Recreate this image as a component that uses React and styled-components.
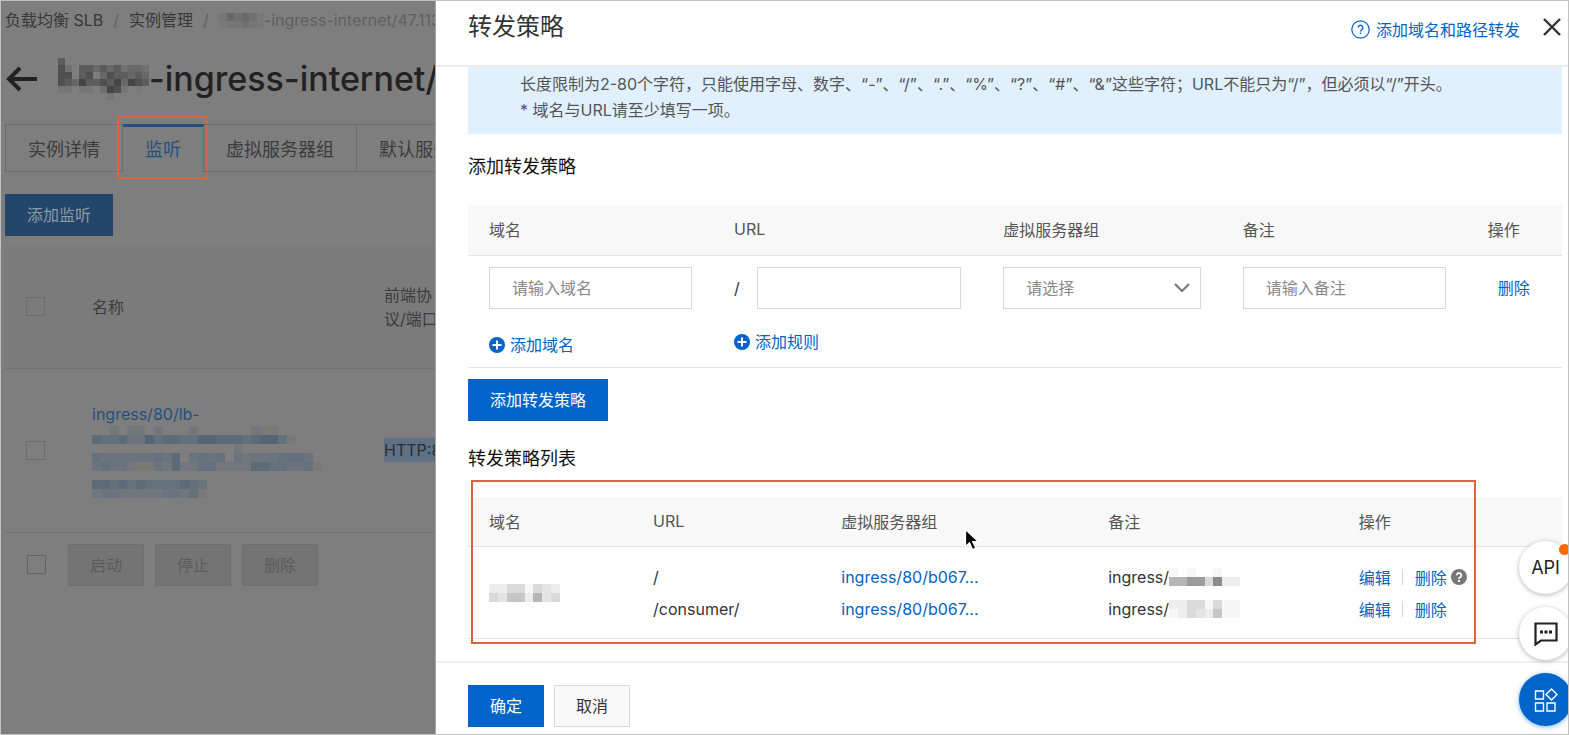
import React, { useState } from 'react'
import styled, { createGlobalStyle, css } from 'styled-components';

const GlobalStyle = createGlobalStyle`
    *, *::before, *::after {
        box-sizing: border-box;
    }
    body {
        margin: 0;
        background: #fff;
    }
    body, button, input, select {
        font-family: Inter, 'Noto Sans CJK SC', sans-serif;
        font-size: 16px;
    }
    h1, h2, p {
        margin: 0;
        font-weight: 400;
    }
    a {
        text-decoration: none;
    }
`;

const Frame = styled.div`
    position: relative;
    display: flex;
    min-height: 100vh;
    border: 1px solid #c1c1c1;
    overflow: hidden;
`;

/* ---------- page behind the drawer ---------- */

const Page = styled.main`
    flex: 0 0 435px;
    min-width: 0;
    padding-left: 4px;
    overflow: hidden;
    white-space: nowrap;
    background: #7e7e7e;
    border-right: 1px solid #a6a6a6;
    color: #3c3c3c;
`;

const Breadcrumb = styled.nav`
    display: flex;
    align-items: center;
    gap: 10px;
    height: 38px;
    line-height: 24px;
    color: #606060;

    a {
        color: #383838;
    }
`;

const Current = styled.span`
    display: flex;
    align-items: center;
`;

const TitleRow = styled.div`
    display: flex;
    align-items: center;
    height: 80px;
`;

const BackButton = styled.button`
    display: flex;
    padding: 0;
    margin-right: 20px;
    border: 0;
    background: none;
    color: #222;
`;

const PageTitle = styled.h1`
    display: flex;
    align-items: center;
    font-size: 34px;
    font-weight: 500;
    line-height: 48px;
    color: #222;
`;

const Tabs = styled.div`
    display: flex;
    margin-top: 5px;
    border-left: 1px solid #6c6c6c;
`;

const Tab = styled.button`
    position: relative;
    height: 48px;
    padding: 0 22px;
    border: 1px solid #6c6c6c;
    border-left: 0;
    background: none;
    font-size: 18px;
    color: #3c3c3c;

    ${({ $active }) => $active && css`
        padding-bottom: 2px;
        border-top: 3px solid #24507f;
        border-bottom-color: transparent;
        color: #24507f;
    `}
`;

const TabMark = styled.span`
    position: absolute;
    inset: -11px -5px -8px -6px;
    border: 2px solid #dc6340;
`;

const DimPrimary = styled.button`
    display: block;
    height: 42px;
    margin: 22px 0 10px;
    padding: 0 22px 2px;
    border: 0;
    background: #23466a;
    color: #8c9aa8;
`;

const ListenerTable = styled.table`
    width: 520px;
    table-layout: fixed;
    border-collapse: collapse;
    line-height: 24px;
    text-align: left;

    th, td {
        padding: 0 21px;
        font-weight: 400;
        border-bottom: 1px solid #727272;
    }
    th {
        height: 122px;
        background: #7b7b7b;
    }
    td {
        height: 164px;
    }
`;

const PlainCheckbox = styled.input`
    appearance: none;
    display: block;
    width: 19px;
    height: 19px;
    margin: 0;
    border: 1px solid ${({ $strong }) => ($strong ? '#646464' : '#6c6c6c')};
`;

const ListenerLink = styled.a`
    display: block;
    color: #24507f;
`;

const Selected = styled.span`
    display: inline-block;
    background: #5f7285;
    color: #2a2f35;
`;

const BatchBar = styled.div`
    display: flex;
    align-items: center;
    gap: 11px;
    padding: 11px 0 0 22px;
`;

const BatchButton = styled.button`
    height: 42px;
    padding: 0 21px 2px;
    border: 1px solid #6f6f6f;
    background: #747474;
    color: #5c5c5c;

    ${PlainCheckbox} + & {
        margin-left: 11px;
    }
`;

/* ---------- drawer ---------- */

const Drawer = styled.section`
    display: flex;
    flex: 1;
    flex-direction: column;
    min-width: 0;
    background: #fff;
    color: #333;
`;

const DrawerHeader = styled.header`
    display: flex;
    align-items: center;
    height: 66px;
    padding: 0 7px 12px 32px;
    border-bottom: 2px solid #ebecee;
`;

const DrawerTitle = styled.h2`
    flex: 1;
    font-size: 24px;
    line-height: 36px;
`;

const HelpLink = styled.a`
    display: flex;
    align-items: center;
    gap: 6px;
    margin-top: 4px;
    color: #0064c8;
`;

const CloseButton = styled.button`
    display: flex;
    margin-left: 23px;
    padding: 0;
    border: 0;
    background: none;
    color: #333;
`;

const DrawerBody = styled.div`
    flex: 1;
    padding: 0 6px 21px 32px;
`;

const Notice = styled.div`
    padding: 4px 52px 11px;
    background: #e0f0ff;
    line-height: 26px;
    color: #555;
`;

const SectionTitle = styled.h2`
    margin: 19px 0 24px;
    font-size: 18px;
    line-height: 28px;
    color: #111;
`;

const DataTable = styled.table`
    width: 100%;
    table-layout: fixed;
    border-collapse: collapse;
    text-align: left;

    th, td {
        padding: 0 21px;
        font-weight: 400;
        border-bottom: 1px solid #e3e4e6;
    }
    th {
        height: 50px;
        padding-bottom: 1px;
        background: #f8f8f8;
        color: #555;
        white-space: nowrap;
    }
`;

const FormCell = styled.td`
    height: 112px;
    vertical-align: top;
`;

const Field = styled.div`
    position: relative;
    display: flex;
    align-items: center;
    gap: 17px;
    margin: 11px 0 ${({ $gap }) => $gap || 0}px;
    line-height: 24px;
`;

const control = css`
    flex: 1;
    width: 100%;
    min-width: 0;
    height: 42px;
    padding: 0 22px;
    border: 1px solid #d7d8d9;
    border-radius: 0;
    background: #fff;
    color: #888;
`;

const TextInput = styled.input`
    ${control}

    &::placeholder {
        color: #888;
        opacity: 1;
    }
`;

const SelectInput = styled.select`
    ${control}
    appearance: none;
`;

const Chevron = styled.svg`
    position: absolute;
    right: 11px;
    pointer-events: none;
`;

const AddLink = styled.a`
    display: flex;
    align-items: center;
    gap: 5px;
    line-height: 24px;
    color: #0064c8;
`;

const RowLink = styled.a`
    padding: 0 10px;
    line-height: 42px;
    white-space: nowrap;
    color: #0064c8;
`;

const Button = styled.button`
    height: 42px;
    padding: 0 21px 2px;
    border: 1px solid ${({ $primary }) => ($primary ? '#0064c8' : '#d9d9d9')};
    background: ${({ $primary }) => ($primary ? '#0064c8' : '#f8f8f8')};
    color: ${({ $primary }) => ($primary ? '#fff' : '#333')};
`;

const FormActions = styled.div`
    padding: 11px 0 5px;
`;

const RuleList = styled.div`
    position: relative;
`;

const ListMark = styled.div`
    position: absolute;
    inset: -17px 86px -5px 3px;
    border: 2px solid #dc6340;
    pointer-events: none;
`;

const Cursor = styled.svg`
    position: absolute;
    top: 31px;
    left: 496px;
`;

const ListCell = styled.td`
    height: 92px;
`;

const Line = styled.div`
    display: flex;
    align-items: center;
    height: 32px;
    white-space: nowrap;

    a {
        color: #0064c8;
    }
`;

const Divider = styled.span`
    width: 1px;
    height: 16px;
    margin: 0 12px 0 11px;
    background: #d4d4d4;
`;

const HintIcon = styled.svg`
    margin-left: 4px;
`;

const DrawerFooter = styled.footer`
    display: flex;
    gap: 10px;
    padding: 22px 32px 7px;
    border-top: 2px solid #f0f0f1;
`;

/* ---------- floating tools ---------- */

const FloatTools = styled.div`
    position: absolute;
    right: -4px;
    bottom: 8px;
    display: flex;
    flex-direction: column;
    gap: 13px;
`;

const FloatButton = styled.button`
    position: relative;
    display: flex;
    align-items: center;
    justify-content: center;
    width: 53px;
    height: 53px;
    padding: 0;
    border: 0;
    border-radius: 50%;
    background: ${({ $primary }) => ($primary ? '#0064c8' : '#fff')};
    box-shadow: 0 1px 5px ${({ $primary }) => ($primary ? 'rgba(0, 100, 200, 0.5)' : 'rgba(0, 0, 0, 0.3)')};
    font-size: 18px;
    color: #222;
`;

const Badge = styled.span`
    position: absolute;
    top: 3px;
    right: 2px;
    width: 11px;
    height: 11px;
    border-radius: 50%;
    background: #ff6a00;
`;

// Shades used for the masked out names, dots are left empty
const darkShades = {
    1: '#454545', 2: '#505050', 3: '#5c5c5c', 4: '#686868', 5: '#707070', 6: '#767676', 7: '#7a7a7a',
};

const blueShades = {
    a: '#556372', b: '#5d6a77', c: '#65707d', d: '#6b737e', e: '#72777d', f: '#797978',
};

const lightShades = {
    1: '#8c8c8c', 2: '#9c9c9c', 3: '#b6b6b6', 4: '#c6c6c6', 5: '#dadada', 6: '#e4e4e4', 7: '#ededed', 8: '#f7f7f7',
};

const Mosaic = ({ rows, shades, width, height }) => (
    <svg
        width={width}
        height={height}
        viewBox={`0 0 ${rows[0].length} ${rows.length}`}
        preserveAspectRatio="none"
        shapeRendering="crispEdges"
        display="block"
        aria-hidden="true"
    >
        {rows.map((row, y) => row.split('').map((cell, x) => (
            shades[cell] && <rect key={`${x}-${y}`} x={x} y={y} width="1" height="1" fill={shades[cell]} />
        )))}
    </svg>
);

const PlusIcon = () => (
    <svg width="16" height="16" viewBox="0 0 16 16" aria-hidden="true">
        <circle cx="8" cy="8" r="8" fill="#0064c8" />
        <path d="M8 3.5v9M3.5 8h9" stroke="#fff" strokeWidth="2" />
    </svg>
);

const rules = [
    { url: '/', group: 'ingress/80/b067...', mask: ['8.8..8..', '33225177'], hint: true },
    { url: '/consumer/', group: 'ingress/80/b067...', mask: ['77558588', '87567488'] },
];

export default function App() {

    const [domain, setDomain] = useState('');
    const [url, setUrl] = useState('');
    const [remark, setRemark] = useState('');

    const handleChange = setter => e => setter(e.target.value);

    return (
        <Frame>
            <GlobalStyle />
            <Page>
                <Breadcrumb>
                    <a href="#slb">负载均衡 SLB</a>
                    <span>/</span>
                    <a href="#instances">实例管理</a>
                    <span>/</span>
                    <Current>
                        <Mosaic rows={['645457', '766567']} shades={darkShades} width={45} height={15} />
                        -ingress-internet/47.113
                    </Current>
                </Breadcrumb>
                <TitleRow>
                    <BackButton aria-label="返回">
                        <svg width="33" height="26" viewBox="0 0 33 26" fill="none" stroke="currentColor" strokeWidth="4">
                            <path d="M32 13H4M15 2L4 13l11 11" />
                        </svg>
                    </BackButton>
                    <PageTitle>
                        <Mosaic
                            rows={[
                                '3............',
                                '25.3343435445',
                                '22.32.4233434',
                                '2341332314123',
                                '66.66.5126.7.',
                                '.......6.....',
                            ]}
                            shades={darkShades}
                            width={91}
                            height={42}
                        />
                        -ingress-internet/
                    </PageTitle>
                </TitleRow>
                <Tabs role="tablist">
                    <Tab role="tab">实例详情</Tab>
                    <Tab role="tab" aria-selected="true" $active>监听<TabMark /></Tab>
                    <Tab role="tab">虚拟服务器组</Tab>
                    <Tab role="tab">默认服务器组</Tab>
                </Tabs>
                <DimPrimary>添加监听</DimPrimary>
                <ListenerTable>
                    <colgroup>
                        <col style={{ width: 66 }} />
                        <col style={{ width: 292 }} />
                        <col />
                    </colgroup>
                    <thead>
                        <tr>
                            <th><PlainCheckbox type="checkbox" aria-label="全选" /></th>
                            <th>名称</th>
                            <th>前端协<br />议/端口</th>
                        </tr>
                    </thead>
                    <tbody>
                        <tr>
                            <td><PlainCheckbox type="checkbox" aria-label="选择监听" /></td>
                            <td>
                                <ListenerLink href="#listener">
                                    ingress/80/lb-
                                    <Mosaic
                                        rows={[
                                            '..e.ee.e...e......eff.....',
                                            'bccbddacbbccaabbbcbaacf...',
                                            '................e.........',
                                            'cddddddcdb.dcdc.dedddcccd.',
                                            'dcddeffdebeecceeeebbccddcf',
                                            '..........................',
                                            'bbcbcbccccbcd.............',
                                            'eddeeeeeddecf.............',
                                        ]}
                                        shades={blueShades}
                                        width={230}
                                        height={72}
                                    />
                                </ListenerLink>
                            </td>
                            <td><Selected>HTTP:80</Selected></td>
                        </tr>
                    </tbody>
                </ListenerTable>
                <BatchBar>
                    <PlainCheckbox type="checkbox" aria-label="批量选择" $strong />
                    <BatchButton>启动</BatchButton>
                    <BatchButton>停止</BatchButton>
                    <BatchButton>删除</BatchButton>
                </BatchBar>
            </Page>

            <Drawer>
                <DrawerHeader>
                    <DrawerTitle>转发策略</DrawerTitle>
                    <HelpLink href="#help">
                        <svg width="19" height="19" viewBox="0 0 19 19" fill="none" stroke="currentColor" aria-hidden="true">
                            <circle cx="9.5" cy="9.5" r="8.7" strokeWidth="1.2" />
                            <path d="M7.2 7.6a2.3 2.3 0 1 1 3.6 1.9c-.9.6-1.3 1-1.3 1.9" strokeWidth="1.4" />
                            <path d="M9.5 12.6v1.5" strokeWidth="1.5" />
                        </svg>
                        添加域名和路径转发
                    </HelpLink>
                    <CloseButton aria-label="关闭">
                        <svg width="18" height="18" viewBox="0 0 18 18" stroke="currentColor" strokeWidth="2.4">
                            <path d="M1 1l16 16M17 1L1 17" />
                        </svg>
                    </CloseButton>
                </DrawerHeader>
                <DrawerBody>
                    <Notice>
                        <p>长度限制为2-80个字符，只能使用字母、数字、“-”、“/”、“.”、“%”、“?”、“#”、“&”这些字符；URL不能只为“/”，但必须以“/”开头。</p>
                        <p>* 域名与URL请至少填写一项。</p>
                    </Notice>
                    <SectionTitle>添加转发策略</SectionTitle>
                    <DataTable>
                        <colgroup>
                            <col style={{ width: '22.4%' }} />
                            <col style={{ width: '24.6%' }} />
                            <col style={{ width: '21.9%' }} />
                            <col style={{ width: '22.4%' }} />
                            <col />
                        </colgroup>
                        <thead>
                            <tr>
                                <th>域名</th>
                                <th>URL</th>
                                <th>虚拟服务器组</th>
                                <th>备注</th>
                                <th>操作</th>
                            </tr>
                        </thead>
                        <tbody>
                            <tr>
                                <FormCell>
                                    <Field $gap={24}>
                                        <TextInput
                                            aria-label="域名"
                                            placeholder="请输入域名"
                                            value={domain}
                                            onChange={handleChange(setDomain)}
                                        />
                                    </Field>
                                    <AddLink href="#add-domain"><PlusIcon />添加域名</AddLink>
                                </FormCell>
                                <FormCell>
                                    <Field $gap={21}>
                                        <label htmlFor="url">/</label>
                                        <TextInput id="url" value={url} onChange={handleChange(setUrl)} />
                                    </Field>
                                    <AddLink href="#add-rule"><PlusIcon />添加规则</AddLink>
                                </FormCell>
                                <FormCell>
                                    <Field>
                                        <SelectInput aria-label="虚拟服务器组">
                                            <option>请选择</option>
                                        </SelectInput>
                                        <Chevron width="16" height="10" viewBox="0 0 16 10" fill="none" stroke="#777" strokeWidth="2">
                                            <path d="M1 1l7 7 7-7" />
                                        </Chevron>
                                    </Field>
                                </FormCell>
                                <FormCell>
                                    <Field>
                                        <TextInput
                                            aria-label="备注"
                                            placeholder="请输入备注"
                                            value={remark}
                                            onChange={handleChange(setRemark)}
                                        />
                                    </Field>
                                </FormCell>
                                <FormCell>
                                    <Field>
                                        <RowLink href="#remove">删除</RowLink>
                                    </Field>
                                </FormCell>
                            </tr>
                        </tbody>
                    </DataTable>
                    <FormActions>
                        <Button $primary>添加转发策略</Button>
                    </FormActions>
                    <SectionTitle>转发策略列表</SectionTitle>
                    <RuleList>
                        <DataTable>
                            <colgroup>
                                <col style={{ width: '15%' }} />
                                <col style={{ width: '17.2%' }} />
                                <col style={{ width: '24.4%' }} />
                                <col style={{ width: '22.9%' }} />
                                <col />
                            </colgroup>
                            <thead>
                                <tr>
                                    <th>域名</th>
                                    <th>URL</th>
                                    <th>虚拟服务器组</th>
                                    <th>备注</th>
                                    <th>操作</th>
                                </tr>
                            </thead>
                            <tbody>
                                <tr>
                                    <ListCell>
                                        <Mosaic rows={['77558567', '56447365']} shades={lightShades} width={71} height={18} />
                                    </ListCell>
                                    <ListCell>
                                        {rules.map(rule => <Line key={rule.url}>{rule.url}</Line>)}
                                    </ListCell>
                                    <ListCell>
                                        {rules.map(rule => (
                                            <Line key={rule.url}><a href="#group">{rule.group}</a></Line>
                                        ))}
                                    </ListCell>
                                    <ListCell>
                                        {rules.map(rule => (
                                            <Line key={rule.url}>
                                                ingress/
                                                <Mosaic rows={rule.mask} shades={lightShades} width={71} height={18} />
                                            </Line>
                                        ))}
                                    </ListCell>
                                    <ListCell>
                                        {rules.map(rule => (
                                            <Line key={rule.url}>
                                                <a href="#edit">编辑</a>
                                                <Divider />
                                                <a href="#delete">删除</a>
                                                {rule.hint && (
                                                    <HintIcon width="16" height="16" viewBox="0 0 16 16" fill="none" stroke="#fff">
                                                        <circle cx="8" cy="8" r="8" fill="#777" stroke="none" />
                                                        <path d="M5.7 6.3a2.3 2.3 0 1 1 3.5 2C8.3 8.8 8 9.1 8 9.9" strokeWidth="1.8" />
                                                        <path d="M8 11v2" strokeWidth="2" />
                                                    </HintIcon>
                                                )}
                                            </Line>
                                        ))}
                                    </ListCell>
                                </tr>
                            </tbody>
                        </DataTable>
                        <ListMark />
                        <Cursor width="16" height="24" viewBox="0 0 16 24" aria-hidden="true">
                            <path d="M1.5 1.5v17l4-3.7 3 6.7 3.2-1.4-3-6.5h5.5z" fill="#000" stroke="#fff" strokeWidth="1.3" />
                        </Cursor>
                    </RuleList>
                </DrawerBody>
                <DrawerFooter>
                    <Button $primary>确定</Button>
                    <Button>取消</Button>
                </DrawerFooter>
            </Drawer>

            <FloatTools>
                <FloatButton>API<Badge /></FloatButton>
                <FloatButton aria-label="反馈">
                    <svg width="24" height="24" viewBox="0 0 24 24" fill="none" stroke="#222" strokeWidth="2.2">
                        <path d="M1.5 1.5h21v17H7l-5.500 4z" />
                        <path d="M6 10h3M10.500 10h3M15 10h3" strokeWidth="3" />
                    </svg>
                </FloatButton>
                <FloatButton $primary aria-label="应用">
                    <svg width="24" height="24" viewBox="0 0 24 24" fill="none" stroke="#fff" strokeWidth="1.4">
                        <path d="M1.5 3h8v8h-8zM1.5 15h8v8h-8zM13 15h8v8h-8zM17.5 1l5.500 5.500-5.500 5.500L12 6.500z" />
                    </svg>
                </FloatButton>
            </FloatTools>
        </Frame>
    )
}
